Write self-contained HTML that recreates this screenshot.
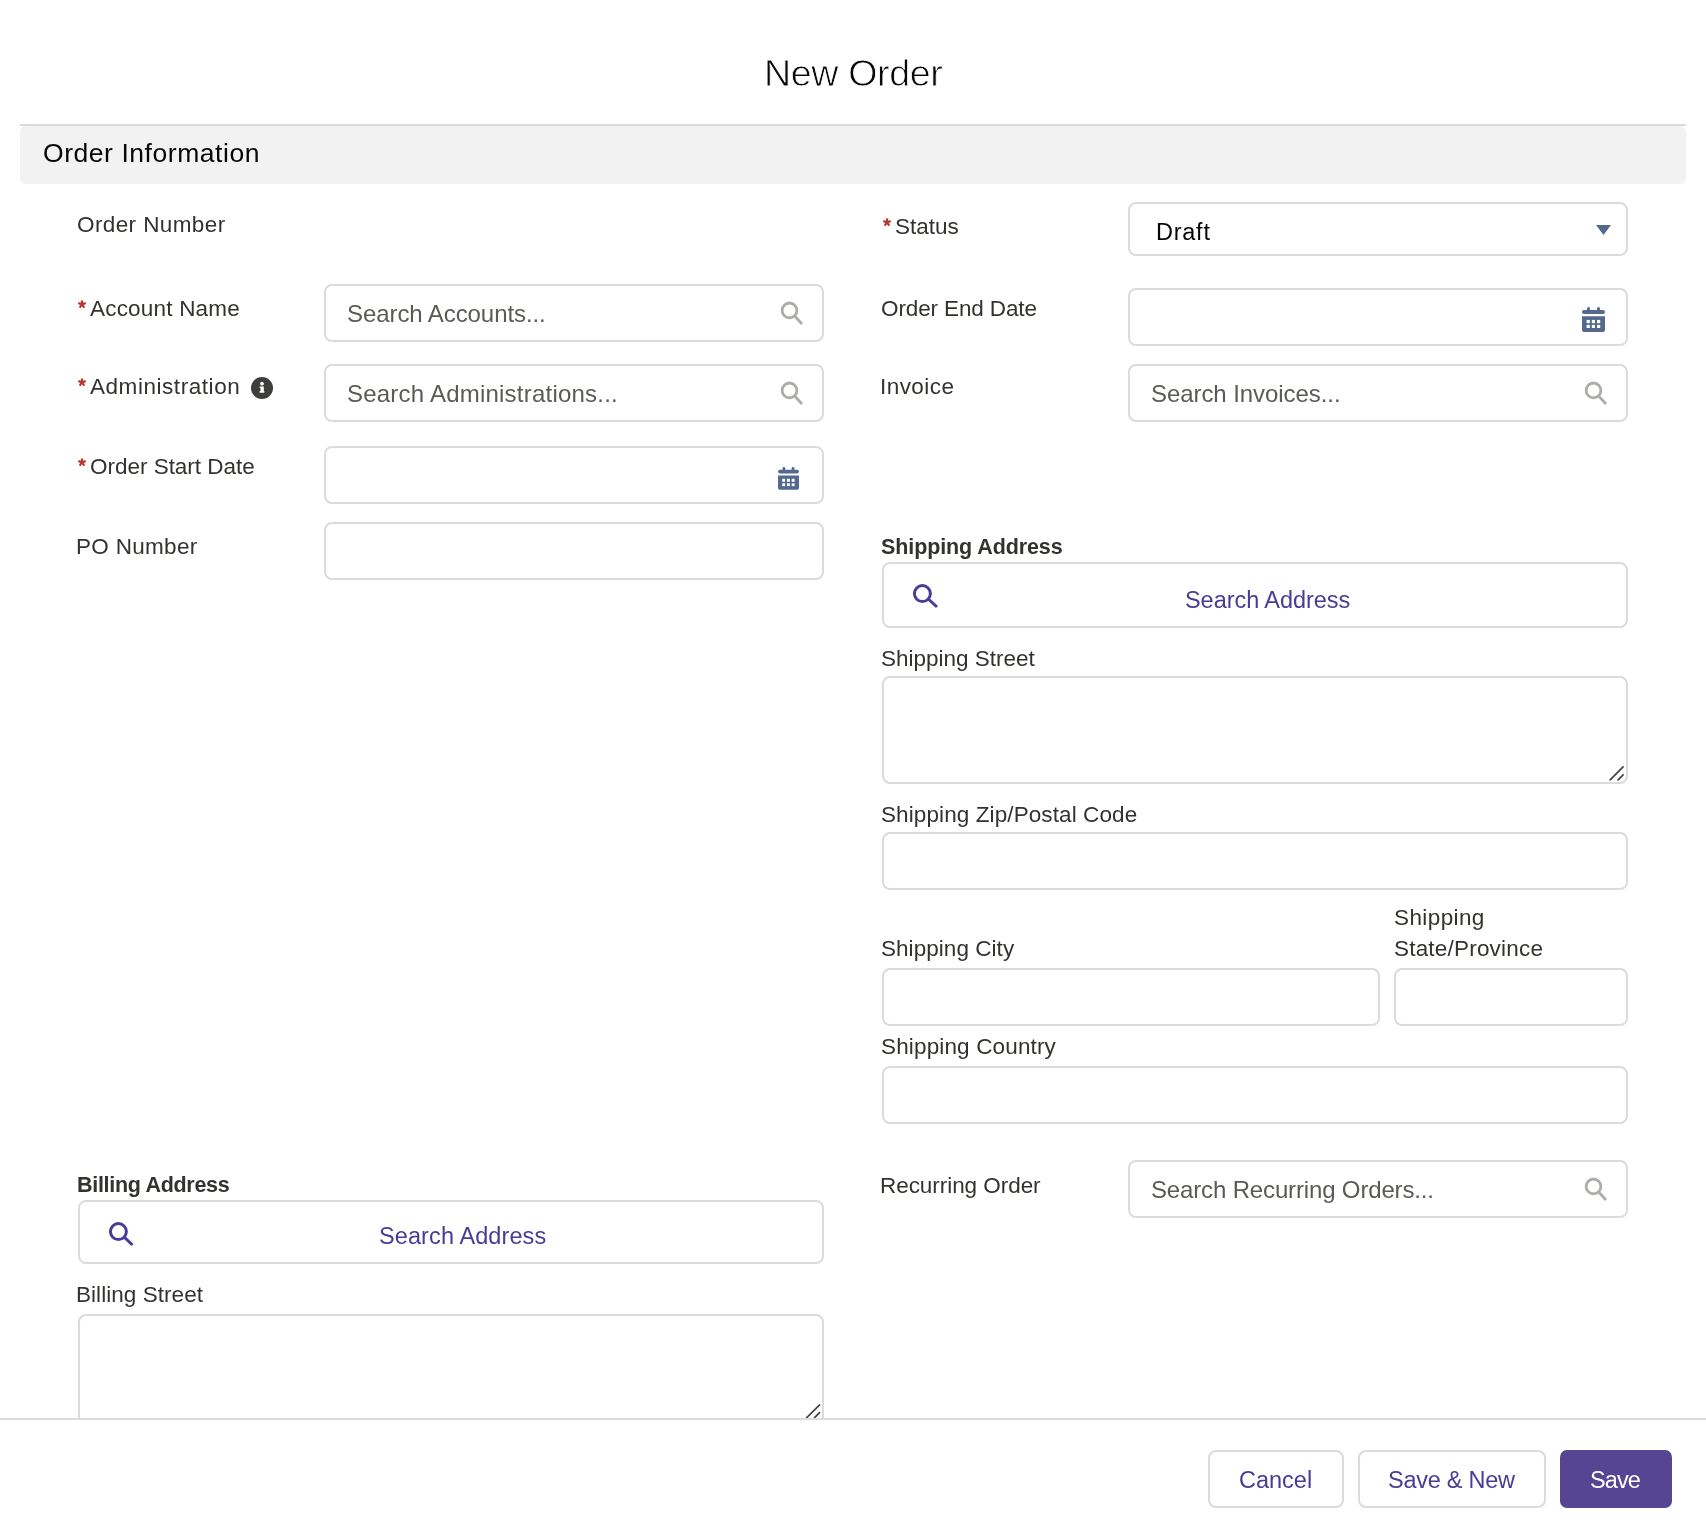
<!DOCTYPE html>
<html><head><meta charset="utf-8"><title>New Order</title>
<style>
html,body{margin:0;padding:0;background:#fff;width:1706px;height:1528px;overflow:hidden;position:relative}
.t{position:absolute;font-family:"Liberation Sans",sans-serif;line-height:1;white-space:nowrap;will-change:transform}
.b{position:absolute;box-sizing:border-box}
svg.b{overflow:visible}
</style></head><body>
<div class="t" style="left:763.50px;top:55.26px;font-size:37.6px;color:#080707;font-weight:400;letter-spacing:-0.35px;-webkit-text-stroke:0.8px #fff;">New Order</div>
<div class="b" style="left:20px;top:124px;width:1666px;height:2px;background:#dddbda;border-radius:0px;"></div>
<div class="b" style="left:20px;top:126px;width:1666px;height:58px;background:#f3f2f2;border-radius:6px;"></div>
<div class="t" style="left:43.00px;top:140.36px;font-size:26.5px;color:#080707;font-weight:400;letter-spacing:0.55px;">Order Information</div>
<div class="t" style="left:77.00px;top:213.75px;font-size:22.5px;color:#33322f;font-weight:400;letter-spacing:0.4px;">Order Number</div>
<svg class="b" style="left:0;top:0" width="1706" height="1528"><path d="M82.00 304.30 l0 -3.0 M82.00 304.30 l2.9 -0.95 M82.00 304.30 l1.8 2.5 M82.00 304.30 l-1.8 2.5 M82.00 304.30 l-2.9 -0.95 " stroke="#b8372f" stroke-width="2.2" stroke-linecap="round" fill="none"/></svg>
<div class="t" style="left:90.00px;top:297.75px;font-size:22.5px;color:#33322f;font-weight:400;letter-spacing:0.2px;">Account Name</div>
<div class="b" style="left:324px;top:284px;width:500px;height:58px;border:2px solid #dddbda;border-radius:8px;background:#fff;"></div>
<div class="t" style="left:347.00px;top:302.48px;font-size:24px;color:#5c5a56;font-weight:400;letter-spacing:-0.08px;">Search Accounts...</div>
<svg class="b" style="left:0;top:0" width="1706" height="1528"><circle cx="789.5" cy="310.4" r="7.4" fill="none" stroke="#aeaca9" stroke-width="2.8"/><line x1="794.51" y1="315.85" x2="802" y2="324" stroke="#aeaca9" stroke-width="2.8" stroke-linecap="butt"/></svg>
<svg class="b" style="left:0;top:0" width="1706" height="1528"><path d="M82.00 382.30 l0 -3.0 M82.00 382.30 l2.9 -0.95 M82.00 382.30 l1.8 2.5 M82.00 382.30 l-1.8 2.5 M82.00 382.30 l-2.9 -0.95 " stroke="#b8372f" stroke-width="2.2" stroke-linecap="round" fill="none"/></svg>
<div class="t" style="left:90.00px;top:375.75px;font-size:22.5px;color:#33322f;font-weight:400;letter-spacing:0.55px;">Administration</div>
<div class="b" style="left:251px;top:377px;width:22px;height:22px;border-radius:11px;background:#3e3e3c"></div>
<div class="b" style="left:251px;top:377px;width:22px;height:22px"><svg width="22" height="22"><circle cx="11" cy="6.7" r="1.85" fill="#fff"/><path d="M8.7 9.5 H12.8 V13.9 H13.3 V15.7 H8.6 V13.9 H9.5 V11 H8.7 Z" fill="#fff"/></svg></div>
<div class="b" style="left:324px;top:364px;width:500px;height:58px;border:2px solid #dddbda;border-radius:8px;background:#fff;"></div>
<div class="t" style="left:347.00px;top:382.48px;font-size:24px;color:#5c5a56;font-weight:400;letter-spacing:0.22px;">Search Administrations...</div>
<svg class="b" style="left:0;top:0" width="1706" height="1528"><circle cx="789.5" cy="390.4" r="7.4" fill="none" stroke="#aeaca9" stroke-width="2.8"/><line x1="794.51" y1="395.85" x2="802" y2="404" stroke="#aeaca9" stroke-width="2.8" stroke-linecap="butt"/></svg>
<svg class="b" style="left:0;top:0" width="1706" height="1528"><path d="M82.00 462.30 l0 -3.0 M82.00 462.30 l2.9 -0.95 M82.00 462.30 l1.8 2.5 M82.00 462.30 l-1.8 2.5 M82.00 462.30 l-2.9 -0.95 " stroke="#b8372f" stroke-width="2.2" stroke-linecap="round" fill="none"/></svg>
<div class="t" style="left:90.00px;top:455.75px;font-size:22.5px;color:#33322f;font-weight:400;letter-spacing:-0.02px;">Order Start Date</div>
<div class="b" style="left:324px;top:446px;width:500px;height:58px;border:2px solid #dddbda;border-radius:8px;background:#fff;"></div>
<svg class="b" style="left:778px;top:467px" width="21" height="23.7" viewBox="0 0 23 26">
<rect x="5" y="0" width="3" height="4" rx="1.5" fill="#54698d"/>
<rect x="15" y="0" width="3" height="4" rx="1.5" fill="#54698d"/>
<rect x="0" y="3" width="23" height="4" rx="2" fill="#54698d"/>
<path d="M0 9.3 H23 V23 a2 2 0 0 1 -2 2 H2 a2 2 0 0 1 -2 -2 Z" fill="#54698d"/>
<rect x="4.6" y="12.9" width="3.2" height="3.3" fill="#fff"/>
<rect x="9.8" y="12.9" width="3.2" height="3.3" fill="#fff"/>
<rect x="15" y="12.9" width="3.2" height="3.3" fill="#fff"/>
<rect x="4.6" y="17.9" width="3.2" height="3.1" fill="#fff"/>
<rect x="9.8" y="17.9" width="3.2" height="3.1" fill="#fff"/>
<rect x="15" y="17.9" width="3.2" height="3.1" fill="#fff"/>
</svg>
<div class="t" style="left:75.50px;top:535.75px;font-size:22.5px;color:#33322f;font-weight:400;letter-spacing:0.3px;">PO Number</div>
<div class="b" style="left:324px;top:522px;width:500px;height:58px;border:2px solid #dddbda;border-radius:8px;background:#fff;"></div>
<svg class="b" style="left:0;top:0" width="1706" height="1528"><path d="M887.00 222.30 l0 -3.0 M887.00 222.30 l2.9 -0.95 M887.00 222.30 l1.8 2.5 M887.00 222.30 l-1.8 2.5 M887.00 222.30 l-2.9 -0.95 " stroke="#b8372f" stroke-width="2.2" stroke-linecap="round" fill="none"/></svg>
<div class="t" style="left:894.50px;top:215.75px;font-size:22.5px;color:#33322f;font-weight:400;letter-spacing:0px;">Status</div>
<div class="b" style="left:1128px;top:202px;width:500px;height:54px;border:2px solid #dddbda;border-radius:8px;background:#fff;"></div>
<div class="t" style="left:1155.60px;top:220.90px;font-size:23.5px;color:#080707;font-weight:400;letter-spacing:0.75px;">Draft</div>
<svg class="b" style="left:1595px;top:224px" width="18" height="12"><path d="M1 1 H16 L8.5 11 Z" fill="#54698d"/></svg>
<div class="t" style="left:881.00px;top:297.75px;font-size:22.5px;color:#33322f;font-weight:400;letter-spacing:-0.12px;">Order End Date</div>
<div class="b" style="left:1128px;top:288px;width:500px;height:58px;border:2px solid #dddbda;border-radius:8px;background:#fff;"></div>
<svg class="b" style="left:1582px;top:307px" width="23" height="26.0" viewBox="0 0 23 26">
<rect x="5" y="0" width="3" height="4" rx="1.5" fill="#54698d"/>
<rect x="15" y="0" width="3" height="4" rx="1.5" fill="#54698d"/>
<rect x="0" y="3" width="23" height="4" rx="2" fill="#54698d"/>
<path d="M0 9.3 H23 V23 a2 2 0 0 1 -2 2 H2 a2 2 0 0 1 -2 -2 Z" fill="#54698d"/>
<rect x="4.6" y="12.9" width="3.2" height="3.3" fill="#fff"/>
<rect x="9.8" y="12.9" width="3.2" height="3.3" fill="#fff"/>
<rect x="15" y="12.9" width="3.2" height="3.3" fill="#fff"/>
<rect x="4.6" y="17.9" width="3.2" height="3.1" fill="#fff"/>
<rect x="9.8" y="17.9" width="3.2" height="3.1" fill="#fff"/>
<rect x="15" y="17.9" width="3.2" height="3.1" fill="#fff"/>
</svg>
<div class="t" style="left:880.00px;top:375.75px;font-size:22.5px;color:#33322f;font-weight:400;letter-spacing:0.45px;">Invoice</div>
<div class="b" style="left:1128px;top:364px;width:500px;height:58px;border:2px solid #dddbda;border-radius:8px;background:#fff;"></div>
<div class="t" style="left:1151.00px;top:382.48px;font-size:24px;color:#5c5a56;font-weight:400;letter-spacing:-0.07px;">Search Invoices...</div>
<svg class="b" style="left:0;top:0" width="1706" height="1528"><circle cx="1593.5" cy="390.4" r="7.4" fill="none" stroke="#aeaca9" stroke-width="2.8"/><line x1="1598.51" y1="395.85" x2="1606" y2="404" stroke="#aeaca9" stroke-width="2.8" stroke-linecap="butt"/></svg>
<div class="t" style="left:881.00px;top:536.60px;font-size:21.5px;color:#33322f;font-weight:700;letter-spacing:-0.1px;">Shipping Address</div>
<div class="b" style="left:882px;top:562px;width:746px;height:66px;border:2px solid #dddbda;border-radius:8px;background:#fff;"></div>
<svg class="b" style="left:0;top:0" width="1706" height="1528"><circle cx="922.4" cy="593.6" r="8" fill="none" stroke="#4a3b94" stroke-width="3"/><line x1="928.29" y1="599.01" x2="937" y2="607" stroke="#4a3b94" stroke-width="3" stroke-linecap="butt"/></svg>
<div class="t" style="left:1185.00px;top:588.90px;font-size:23.5px;color:#4a3b94;font-weight:400;letter-spacing:-0.05px;">Search Address</div>
<div class="t" style="left:881.00px;top:647.75px;font-size:22.5px;color:#33322f;font-weight:400;letter-spacing:0.0px;">Shipping Street</div>
<div class="b" style="left:882px;top:676px;width:746px;height:108px;border:2px solid #dddbda;border-radius:8px;background:#fff;"></div>
<svg class="b" style="left:0;top:0" width="1706" height="1528"><line x1="1610.20" y1="779.80" x2="1623.10" y2="766.90" stroke="#444" stroke-width="1.7" stroke-linecap="round"/><line x1="1618.10" y1="779.80" x2="1623.10" y2="774.80" stroke="#444" stroke-width="1.7" stroke-linecap="round"/></svg>
<div class="t" style="left:881.00px;top:803.75px;font-size:22.5px;color:#33322f;font-weight:400;letter-spacing:0.1px;">Shipping Zip/Postal Code</div>
<div class="b" style="left:882px;top:832px;width:746px;height:58px;border:2px solid #dddbda;border-radius:8px;background:#fff;"></div>
<div class="t" style="left:881.00px;top:937.75px;font-size:22.5px;color:#33322f;font-weight:400;letter-spacing:0.05px;">Shipping City</div>
<div class="t" style="left:1393.50px;top:906.75px;font-size:22.5px;color:#33322f;font-weight:400;letter-spacing:0.4px;">Shipping</div>
<div class="t" style="left:1393.50px;top:937.75px;font-size:22.5px;color:#33322f;font-weight:400;letter-spacing:0.2px;">State/Province</div>
<div class="b" style="left:882px;top:968px;width:498px;height:58px;border:2px solid #dddbda;border-radius:8px;background:#fff;"></div>
<div class="b" style="left:1394px;top:968px;width:234px;height:58px;border:2px solid #dddbda;border-radius:8px;background:#fff;"></div>
<div class="t" style="left:881.00px;top:1035.75px;font-size:22.5px;color:#33322f;font-weight:400;letter-spacing:0.15px;">Shipping Country</div>
<div class="b" style="left:882px;top:1066px;width:746px;height:58px;border:2px solid #dddbda;border-radius:8px;background:#fff;"></div>
<div class="t" style="left:880.00px;top:1174.75px;font-size:22.5px;color:#33322f;font-weight:400;letter-spacing:-0.05px;">Recurring Order</div>
<div class="b" style="left:1128px;top:1160px;width:500px;height:58px;border:2px solid #dddbda;border-radius:8px;background:#fff;"></div>
<div class="t" style="left:1151.00px;top:1178.48px;font-size:24px;color:#5c5a56;font-weight:400;letter-spacing:-0.15px;">Search Recurring Orders...</div>
<svg class="b" style="left:0;top:0" width="1706" height="1528"><circle cx="1593.5" cy="1186.4" r="7.4" fill="none" stroke="#aeaca9" stroke-width="2.8"/><line x1="1598.51" y1="1191.85" x2="1606" y2="1200" stroke="#aeaca9" stroke-width="2.8" stroke-linecap="butt"/></svg>
<div class="t" style="left:77.00px;top:1174.60px;font-size:21.5px;color:#33322f;font-weight:700;letter-spacing:-0.3px;">Billing Address</div>
<div class="b" style="left:78px;top:1200px;width:746px;height:64px;border:2px solid #dddbda;border-radius:8px;background:#fff;"></div>
<svg class="b" style="left:0;top:0" width="1706" height="1528"><circle cx="118.4" cy="1231.6" r="8" fill="none" stroke="#4a3b94" stroke-width="3"/><line x1="124.20" y1="1237.11" x2="132.5" y2="1245" stroke="#4a3b94" stroke-width="3" stroke-linecap="butt"/></svg>
<div class="t" style="left:379.00px;top:1225.40px;font-size:23.5px;color:#4a3b94;font-weight:400;letter-spacing:0.1px;">Search Address</div>
<div class="t" style="left:76.00px;top:1283.75px;font-size:22.5px;color:#33322f;font-weight:400;letter-spacing:0.05px;">Billing Street</div>
<div class="b" style="left:78px;top:1314px;width:746px;height:146px;border:2px solid #dddbda;border-radius:8px;background:#fff;"></div>
<svg class="b" style="left:0;top:0" width="1706" height="1528"><line x1="806.70" y1="1417.70" x2="819.60" y2="1404.80" stroke="#444" stroke-width="1.7" stroke-linecap="round"/><line x1="814.60" y1="1417.70" x2="819.60" y2="1412.70" stroke="#444" stroke-width="1.7" stroke-linecap="round"/></svg>
<div class="b" style="left:0px;top:1418px;width:1706px;height:110px;background:#fff;border-radius:0px;"></div>
<div class="b" style="left:0px;top:1418px;width:1706px;height:2px;background:#dddbda;border-radius:0px;"></div>
<div class="b" style="left:1208px;top:1450px;width:136px;height:58px;border:2px solid #dddbda;border-radius:8px;background:#fff;"></div>
<div class="t" style="left:1239.00px;top:1468.90px;font-size:23.5px;color:#4a3b94;font-weight:400;letter-spacing:0.0px;">Cancel</div>
<div class="b" style="left:1358px;top:1450px;width:188px;height:58px;border:2px solid #dddbda;border-radius:8px;background:#fff;"></div>
<div class="t" style="left:1388.00px;top:1468.90px;font-size:23.5px;color:#4a3b94;font-weight:400;letter-spacing:-0.25px;">Save &amp; New</div>
<div class="b" style="left:1560px;top:1450px;width:112px;height:58px;background:#564593;border-radius:7px;"></div>
<div class="t" style="left:1589.50px;top:1468.90px;font-size:23.5px;color:#fff;font-weight:400;letter-spacing:-0.9px;">Save</div>
</body></html>
